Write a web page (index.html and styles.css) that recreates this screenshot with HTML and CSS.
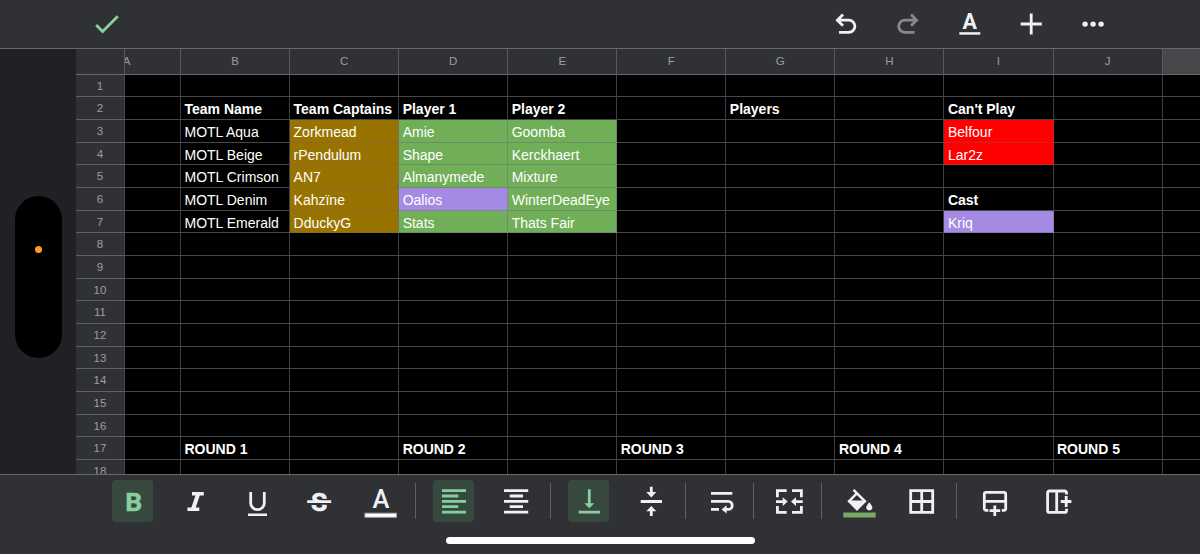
FILE: index.html
```html
<!DOCTYPE html>
<html lang="en">
<head>
<meta charset="utf-8">
<title>Spreadsheet</title>
<link rel="stylesheet" href="styles.css">
</head>
<body>
<div class="app">
  <header class="topbar">
    <svg class="check" width="26" height="24" viewBox="0 0 26 24"><path d="M2.2 13 8.6 19.4 23.8 4.2"/></svg>
    <div class="actions">
      <svg width="32" height="32" viewBox="0 0 32 32"><path class="ln" d="M13 6.6 7.4 12.2 13 17.8M7.4 12.2H18.8A6.1 6.1 0 0 1 18.8 24.400H9"/></svg>
      <svg class="dim" width="32" height="32" viewBox="0 0 32 32"><path class="ln" d="M19 6.6 24.600 12.200 19 17.800M24.600 12.200H12.800A6.100 6.100 0 0 0 12.800 24.400H22.600"/></svg>
      <svg width="32" height="32" viewBox="0 0 32 32"><text class="glyph bold" x="15.7" y="21" font-size="21.5">A</text><path class="fl" d="M5.300 24.200h21v2.500h-21z"/></svg>
      <svg width="32" height="32" viewBox="0 0 32 32"><path class="ln" d="M16.200 5.400V26.600M5.600 16H26.800"/></svg>
      <svg width="32" height="32" viewBox="0 0 32 32"><g class="fl"><circle cx="8.100" cy="16.100" r="2.700"/><circle cx="16.100" cy="16.100" r="2.700"/><circle cx="24.100" cy="16.100" r="2.700"/></g></svg>
    </div>
  </header>

  <main class="body">
    <aside class="edge"><div class="island"><span class="dot"></span></div></aside>
    <div class="sheet">
      <div class="h"></div><div class="h ha"><span>A</span></div><div class="h">B</div><div class="h">C</div><div class="h">D</div><div class="h">E</div><div class="h">F</div><div class="h">G</div><div class="h">H</div><div class="h">I</div><div class="h">J</div><div class="h end"></div>

      <div class="n">1</div><p></p><p></p><p></p><p></p><p></p><p></p><p></p><p></p><p></p><p></p><p class="last"></p>
      <div class="n">2</div><p></p><p class="b">Team Name</p><p class="b">Team Captains</p><p class="b">Player 1</p><p class="b">Player 2</p><p></p><p class="b">Players</p><p></p><p class="b">Can't Play</p><p></p><p class="last"></p>
      <div class="n">3</div><p></p><p>MOTL Aqua</p><p class="gold">Zorkmead</p><p class="green">Amie</p><p class="green">Goomba</p><p></p><p></p><p></p><p class="red">Belfour</p><p></p><p class="last"></p>
      <div class="n">4</div><p></p><p>MOTL Beige</p><p class="gold">rPendulum</p><p class="green">Shape</p><p class="green">Kerckhaert</p><p></p><p></p><p></p><p class="red">Lar2z</p><p></p><p class="last"></p>
      <div class="n">5</div><p></p><p>MOTL Crimson</p><p class="gold">AN7</p><p class="green">Almanymede</p><p class="green">Mixture</p><p></p><p></p><p></p><p></p><p></p><p class="last"></p>
      <div class="n">6</div><p></p><p>MOTL Denim</p><p class="gold">Kahzïne</p><p class="purple">Oalios</p><p class="green">WinterDeadEye</p><p></p><p></p><p></p><p class="b">Cast</p><p></p><p class="last"></p>
      <div class="n">7</div><p></p><p>MOTL Emerald</p><p class="gold">DduckyG</p><p class="green">Stats</p><p class="green">Thats Fair</p><p></p><p></p><p></p><p class="purple">Kriq</p><p></p><p class="last"></p>
      <div class="n">8</div><p></p><p></p><p></p><p></p><p></p><p></p><p></p><p></p><p></p><p></p><p class="last"></p>
      <div class="n">9</div><p></p><p></p><p></p><p></p><p></p><p></p><p></p><p></p><p></p><p></p><p class="last"></p>
      <div class="n">10</div><p></p><p></p><p></p><p></p><p></p><p></p><p></p><p></p><p></p><p></p><p class="last"></p>
      <div class="n">11</div><p></p><p></p><p></p><p></p><p></p><p></p><p></p><p></p><p></p><p></p><p class="last"></p>
      <div class="n">12</div><p></p><p></p><p></p><p></p><p></p><p></p><p></p><p></p><p></p><p></p><p class="last"></p>
      <div class="n">13</div><p></p><p></p><p></p><p></p><p></p><p></p><p></p><p></p><p></p><p></p><p class="last"></p>
      <div class="n">14</div><p></p><p></p><p></p><p></p><p></p><p></p><p></p><p></p><p></p><p></p><p class="last"></p>
      <div class="n">15</div><p></p><p></p><p></p><p></p><p></p><p></p><p></p><p></p><p></p><p></p><p class="last"></p>
      <div class="n">16</div><p></p><p></p><p></p><p></p><p></p><p></p><p></p><p></p><p></p><p></p><p class="last"></p>
      <div class="n">17</div><p></p><p class="b">ROUND 1</p><p></p><p class="b">ROUND 2</p><p></p><p class="b">ROUND 3</p><p></p><p class="b">ROUND 4</p><p></p><p class="b">ROUND 5</p><p class="last"></p>
      <div class="n">18</div><p></p><p></p><p></p><p></p><p></p><p></p><p></p><p></p><p></p><p></p><p class="last"></p>
    </div>
  </main>

  <footer class="bottombar">
    <div class="tools">
      <div class="group">
        <svg class="btn on" viewBox="0 0 41 42"><text class="glyph heavy" x="21.700" y="31" font-size="26.500">B</text></svg>
        <svg class="btn" viewBox="0 0 41 42"><path class="fl" d="M18 12h11.800v3.500h-4L21.700 27.600h3.600V31H13.400v-3.400h4L21.500 15.500H18z"/></svg>
        <svg class="btn" viewBox="0 0 41 42"><path class="ln" d="M14.700 12V23A6.800 6.600 0 0 0 28.300 23V12"/><path class="fl" d="M12 33.400h19v2.500H12z"/></svg>
        <svg class="btn" viewBox="0 0 41 42"><text class="glyph heavy" x="21.200" y="31" font-size="26.500">S</text><path class="gap" d="M9 22.700h24v2H9z"/><path class="fl" d="M9.200 20.200h24v2.700h-24z"/></svg>
        <svg class="btn" viewBox="0 0 41 42"><text class="glyph medium" x="21" y="28" font-size="25.500">A</text><path class="swatch" d="M4.900 33.200h31.600v4.100H4.900z"/></svg>
      </div>
      <span class="sep"></span>
      <div class="group">
        <svg class="btn on" viewBox="0 0 41 42"><path class="ln" d="M9 10.700H33M9 16H25.300M9 21.400H33M9 26.700H25.300M9 32.200H33"/></svg>
        <svg class="btn" viewBox="0 0 41 42"><path class="ln" d="M9 10.700H33.200M14.700 16H28M9 21.400H33.200M14.700 26.700H28M9 32.200H33.200"/></svg>
      </div>
      <span class="sep"></span>
      <div class="group">
        <svg class="btn on" viewBox="0 0 41 42"><path class="ln" d="M21.300 9.300V24M10.700 32.100H32"/><path class="fl" d="M16.300 23.200h10l-5 5z"/></svg>
        <svg class="btn" viewBox="0 0 41 42"><path class="ln" d="M21.300 6.700V13M21.300 36V30M10.700 21.500H32"/><path class="fl" d="M16.300 12.100h10l-5 5.300zM16.300 31.200h10l-5-5.300z"/></svg>
      </div>
      <span class="sep"></span>
      <svg class="btn slim" viewBox="0 0 36 42"><path class="ln" d="M8 13.400H29.300M8 21.400H25.200A4 4 0 0 1 25.200 29.400H22M8 29.400H16"/><path class="fl" d="M18.600 29.400l5-4.200v8.400z"/></svg>
      <span class="sep"></span>
      <svg class="btn slim" viewBox="0 0 36 42"><path class="ln" d="M15.700 10.700H6.400V17.300M21 10.700H30.400V17.300M15.700 32.300H6.400V26M21 32.300H30.400V26M5 21.600H12.500M31.700 21.600H24.500"/><path class="fl" d="M11.700 17.200l5 4.400-5 4.400zM25 17.200l-5 4.400 5 4.400z"/></svg>
      <span class="sep"></span>
      <div class="group">
        <svg class="btn" viewBox="0 0 41 42"><path class="thin" d="M14.500 9.800 26 21.300 18 29.200 10 21.300 17.800 13.300"/><path class="fl" d="M9.200 20.500H26.800L18 29.500zM30.300 22.300C28.300 25 27.200 26.300 27.200 27.300a3.100 3.100 0 0 0 6.200 0C33.400 26.300 32.300 25 30.300 22.300z"/><path class="fillcolor" d="M4.300 32.600h32.400v5H4.300z"/></svg>
        <svg class="btn" viewBox="0 0 41 42"><path class="ln" d="M9.700 10.700H31.700V32.300H9.700zM20.700 10.700V32.300M9.700 21.500H31.700"/></svg>
      </div>
      <span class="sep"></span>
      <div class="group">
        <svg class="btn" viewBox="0 0 41 42"><path class="ln" d="M14.300 30.300H12A1.700 1.700 0 0 1 10.300 28.600V14A1.700 1.700 0 0 1 12 12.300H30A1.700 1.700 0 0 1 31.700 14V28.600A1.700 1.700 0 0 1 30 30.300H27.800M10.300 21.300H31.700M20.800 25.600V36M15.500 30.700H26.200"/></svg>
        <svg class="btn" viewBox="0 0 41 42"><path class="ln" d="M30.500 14.500V12.700A1.700 1.700 0 0 0 28.800 11H13.300A1.700 1.700 0 0 0 11.600 12.700V30.700A1.700 1.700 0 0 0 13.300 32.400H28.800A1.700 1.700 0 0 0 30.500 30.700V28.700M20.700 11V32.400M30.200 16V27M24.700 21.500H35.400"/></svg>
      </div>
    </div>
    <div class="home"></div>
  </footer>
</div>
</body>
</html>
```
FILE: styles.css
```css
* { box-sizing: border-box; }
body { margin: 0; background: #303134; font-family: "Liberation Sans", Arial, sans-serif; }
.app { width: 1200px; height: 554px; display: flex; flex-direction: column; overflow: hidden; background: #303134; }

.topbar { height: 49px; flex: none; display: flex; justify-content: space-between; align-items: center; padding: 0 91px 0 94px; border-bottom: 1px solid #67686b; }
.check path { fill: none; stroke: #8acfa0; stroke-width: 2.8; }
.actions { display: flex; gap: 29.7px; color: #f0f1f6; }
.actions .dim { color: #88898c; }
svg { flex: none; display: block; }
.ln, .thin { fill: none; stroke: currentColor; stroke-width: 2.8; }
.thin { stroke-width: 2.4; }
.fl { fill: currentColor; }
.gap { fill: #303134; }
.glyph { fill: currentColor; font-family: Roboto, sans-serif; text-anchor: middle; }
.bold { font-weight: 700; }
.heavy { font-weight: 700; stroke: currentColor; stroke-width: .5; }
.medium { font-weight: 500; }

.body { height: 425px; flex: none; display: flex; overflow: hidden; }
.edge { width: 76px; flex: none; background: #202124; padding: 147px 0 0 15px; }
.island { width: 47px; height: 162px; border-radius: 24px; background: #000; padding: 50px 0 0 20px; }
.dot { display: block; width: 7px; height: 7px; border-radius: 50%; background: #ff9f14; }

.sheet { flex: 1; display: grid; grid-template-columns: 49px 56px repeat(9, 109.07px) 1fr; grid-template-rows: 25.6px repeat(18, 22.68px); align-content: start; background: #000; }
.h { background: #303134; border-right: 1px solid #58595c; border-bottom: 1px solid #67686b; color: #9c9da1; font-size: 11.5px; line-height: 24px; text-align: center; overflow: hidden; }
.ha span { display: block; width: 109px; margin-left: -53px; }
.end { background: #47484a; border-right: 0; }
.n { background: #303134; border-bottom: 1px solid #606164; border-right: 1px solid #47484b; color: #9c9da1; font-size: 11.5px; line-height: 22px; text-align: center; }
.sheet p { margin: 0; padding: 0 0 0 3.5px; min-width: 0; white-space: nowrap; color: #fff; font-size: 14px; line-height: 24.6px; border-right: 1px solid #3e3f43; border-bottom: 1px solid #47484c; }
.sheet .last { border-right: 0; }
.sheet .b { font-weight: 700; }
.sheet .gold { background: #997300; border-color: #8a6b24; border-right-color: #72715e; }
.sheet .green { background: #70ae57; border-color: #6c8d66; }
.sheet .purple { background: #a48ae2; border-color: #8a7caf; }
.sheet .red { background: #f00; border-color: #cf241f; }

.bottombar { flex: 1; border-top: 1px solid #67686b; padding-top: 5px; display: flex; flex-direction: column; align-items: center; }
.tools { align-self: stretch; display: flex; padding-left: 112px; color: #f0f1f6; }
.group { display: flex; gap: 21px; }
.btn { width: 41px; height: 42px; border-radius: 4px; }
.slim { width: 36px; }
.on { background: #37493e; color: #87cf9e; }
.sep { width: 1px; height: 36px; margin: 3px 17px 0 14px; background: #606164; }
.swatch { fill: #fff; stroke: #a5a6a9; stroke-width: 1; }
.fillcolor { fill: #78aa63; }
.home { width: 309px; height: 7px; margin-top: 15px; border-radius: 4px; background: #fff; }
```
